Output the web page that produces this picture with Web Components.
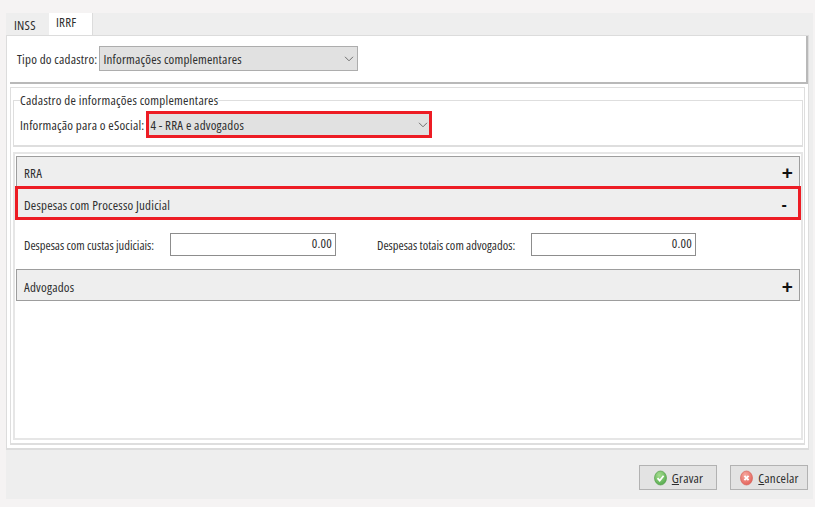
<!DOCTYPE html>
<html lang="pt">
<head>
<meta charset="utf-8">
<title>IRRF</title>
<style>
html, body { margin: 0; height: 507px; overflow: hidden; background: #f5f3f3; }
body { padding: 13px 2px 8px 6px; box-sizing: border-box; font-family: "Open Sans", sans-serif; font-stretch: 75%; font-size: 13px; letter-spacing: .2px; color: #2e2e2e; white-space: nowrap; }
app-window { height: 486px; }
</style>
</head>
<body>
<template id="tpl-window">
<style>
:host { display: flex; flex-direction: column; background: #eeeeee; }
.tabs { display: flex; height: 22px; padding-left: 1px; flex: none; }
.page { flex: none; height: 415px; width: 803px; box-sizing: border-box; background: #fff; border: 1px solid #dcdcdc; border-bottom-width: 2px; padding: 0 0 0 3px; display: flex; flex-direction: column; }
.foot { flex: 1; display: flex; justify-content: flex-end; gap: 13px; padding: 15px 5px 0 0; }
</style>
<div class="tabs"><slot name="tabs"></slot></div>
<div class="page"><slot></slot></div>
<div class="foot"><slot name="actions"></slot></div>
</template>

<template id="tpl-tab">
<style>
:host { display: block; width: 42px; box-sizing: border-box; padding: 4px 0 0 7px; line-height: 16px; }
:host([active]) { width: 44px; background: #fff; padding: 1px 0 0 7px; border-right: 1px solid #dcdcdc; }
</style>
<slot></slot>
</template>

<template id="tpl-toppanel">
<style>
:host { display: flex; align-items: center; gap: 2px; height: 48px; box-sizing: border-box; padding: 0 0 1px 7px; border-right: 2px solid #b9b9b9; border-bottom: 2px solid #b9b9b9; }
</style>
<slot></slot>
</template>

<template id="tpl-select">
<style>
:host { display: flex; align-items: center; justify-content: space-between; box-sizing: border-box; height: 25px; background: #e1e1e1; border: 1px solid #adadad; padding: 0 3px 0 3px; line-height: 16px; }
:host([marked]) { height: 27px; border: 3px solid #ed1c24; padding: 1px 1px 0 1px; }
svg { width: 10px; height: 6px; flex: none; }
</style>
<slot></slot>
<svg viewBox="0 0 10 6"><path d="M1 .8l4 4 4-4" fill="none" stroke="#6f6f6f" stroke-width="1"/></svg>
</template>

<template id="tpl-frame">
<style>
:host { display: flex; flex-direction: column; flex: 1; box-sizing: border-box; margin: 3px 3px 3px 0; padding: 0 1px 3px 2px; border: 1px solid #dedede; border-bottom-width: 2px; }
</style>
<slot></slot>
</template>

<template id="tpl-group">
<style>
:host { display: block; flex: none; }
fieldset { margin: 4px 0 0 0; height: 55px; box-sizing: border-box; padding: 0 0 0 6px; border: 1px solid #dedede; border-bottom-width: 2px; min-width: 0; }
legend { padding: 0; line-height: 16px; letter-spacing: .25px; }
.body { display: flex; align-items: center; gap: 2px; margin-top: 3px; }
</style>
<fieldset><legend><slot name="legend"></slot></legend><div class="body"><slot></slot></div></fieldset>
</template>

<template id="tpl-accordion">
<style>
:host { display: flex; flex-direction: column; flex: 1; box-sizing: border-box; margin-top: 5px; padding: 2px 1px 0 1px; border: 2px solid #e6e6e6; }
</style>
<slot></slot>
</template>

<template id="tpl-head">
<style>
:host { display: flex; align-items: center; justify-content: space-between; flex: none; box-sizing: border-box; height: 32px; padding: 3px 6px 0 7px; background: #eeeeee; border: 1px solid #9d9d9d; line-height: 16px; }
:host([first]) { height: 31px; padding-top: 2px; }
:host([marked]) { height: 34px; margin: -1px -1px 0; border: 3px solid #ed1c24; padding: 4px 11px 0 6px; position: relative; }
:host([marked]) b { font-size: 16px; }
b { font: 700 19px/16px "Liberation Sans", sans-serif; color: #111; }
</style>
<slot></slot><b><slot name="sign"></slot></b>
</template>

<template id="tpl-fields">
<style>
:host { display: flex; align-items: center; flex: none; height: 49px; padding: 0 0 0 8px; }
</style>
<slot></slot>
</template>

<template id="tpl-money">
<style>
:host { display: flex; align-items: center; justify-content: space-between; }
.box { box-sizing: border-box; height: 23px; width: var(--box, 166px); background: #fff; border: 1px solid #8d8d8d; text-align: right; padding: 0 3px 2px 0; line-height: 18px; }
span { padding-top: 2px; font-size: 12.5px; letter-spacing: 0; }
</style>
<span><slot name="label"></slot></span>
<div class="box"><slot></slot></div>
</template>

<template id="tpl-button">
<style>
:host { display: flex; align-items: center; justify-content: center; gap: 5px; box-sizing: border-box; width: 78px; height: 25px; padding-left: 1px; background: #e3e3e3; border: 1px solid #b2b2b2; }
</style>
<slot name="icon"></slot><span><slot></slot></span>
</template>

<app-window>
  <app-tab slot="tabs">INSS</app-tab>
  <app-tab slot="tabs" active>IRRF</app-tab>

  <top-panel>
    <span>Tipo do cadastro:</span>
    <form-select style="width:259px">Informações complementares</form-select>
  </top-panel>

  <app-frame>
    <group-box>
      <span slot="legend">Cadastro de informações complementares</span>
      <span>Informação para o eSocial:</span>
      <form-select marked style="width:286px">4 - RRA e advogados</form-select>
    </group-box>
    <accordion-list>
      <accordion-head first>RRA<span slot="sign">+</span></accordion-head>
      <accordion-head marked>Despesas com Processo Judicial<span slot="sign">-</span></accordion-head>
      <field-row>
        <money-field style="width:312px"><span slot="label">Despesas com custas judiciais:</span>0.00</money-field>
        <money-field style="width:319px;margin-left:41px;--box:165px"><span slot="label">Despesas totais com advogados:</span>0.00</money-field>
      </field-row>
      <accordion-head>Advogados<span slot="sign">+</span></accordion-head>
    </accordion-list>
  </app-frame>

  <action-button slot="actions">
    <svg slot="icon" width="13" height="16" viewBox="0 0 13 16"><defs><radialGradient id="g" cx=".4" cy=".3" r=".8"><stop offset="0" stop-color="#a5dd8f"/><stop offset="1" stop-color="#4ea648"/></radialGradient></defs><ellipse cx="6.5" cy="8" rx="6" ry="7" fill="url(#g)" stroke="#5a9f50" stroke-width=".7"/><path d="M3.5 8.2l2.2 2.5 3.9-5" fill="none" stroke="#fff" stroke-width="1.8"/></svg>
    <span><u>G</u>ravar</span>
  </action-button>
  <action-button slot="actions">
    <svg slot="icon" width="13" height="16" viewBox="0 0 13 16"><defs><radialGradient id="r" cx=".4" cy=".3" r=".8"><stop offset="0" stop-color="#f6a9a0"/><stop offset="1" stop-color="#e25a52"/></radialGradient></defs><ellipse cx="6.5" cy="8" rx="6" ry="7" fill="url(#r)" stroke="#d6675f" stroke-width=".7"/><path d="M4.4 5.8l4.2 4.4M8.6 5.8l-4.2 4.4" fill="none" stroke="#fff" stroke-width="1.9"/></svg>
    <span><u>C</u>ancelar</span>
  </action-button>
</app-window>

<script>
// one small class per template, they only clone their own markup
function register(name, tplId) {
  customElements.define(name, class extends HTMLElement {
    constructor() {
      super();
      const root = this.attachShadow({mode: 'open'});
      root.appendChild(document.getElementById(tplId).content.cloneNode(true));
    }
  });
}
register('app-window', 'tpl-window');
register('app-tab', 'tpl-tab');
register('top-panel', 'tpl-toppanel');
register('form-select', 'tpl-select');
register('app-frame', 'tpl-frame');
register('group-box', 'tpl-group');
register('accordion-list', 'tpl-accordion');
register('accordion-head', 'tpl-head');
register('field-row', 'tpl-fields');
register('money-field', 'tpl-money');
register('action-button', 'tpl-button');
</script>
</body>
</html>
